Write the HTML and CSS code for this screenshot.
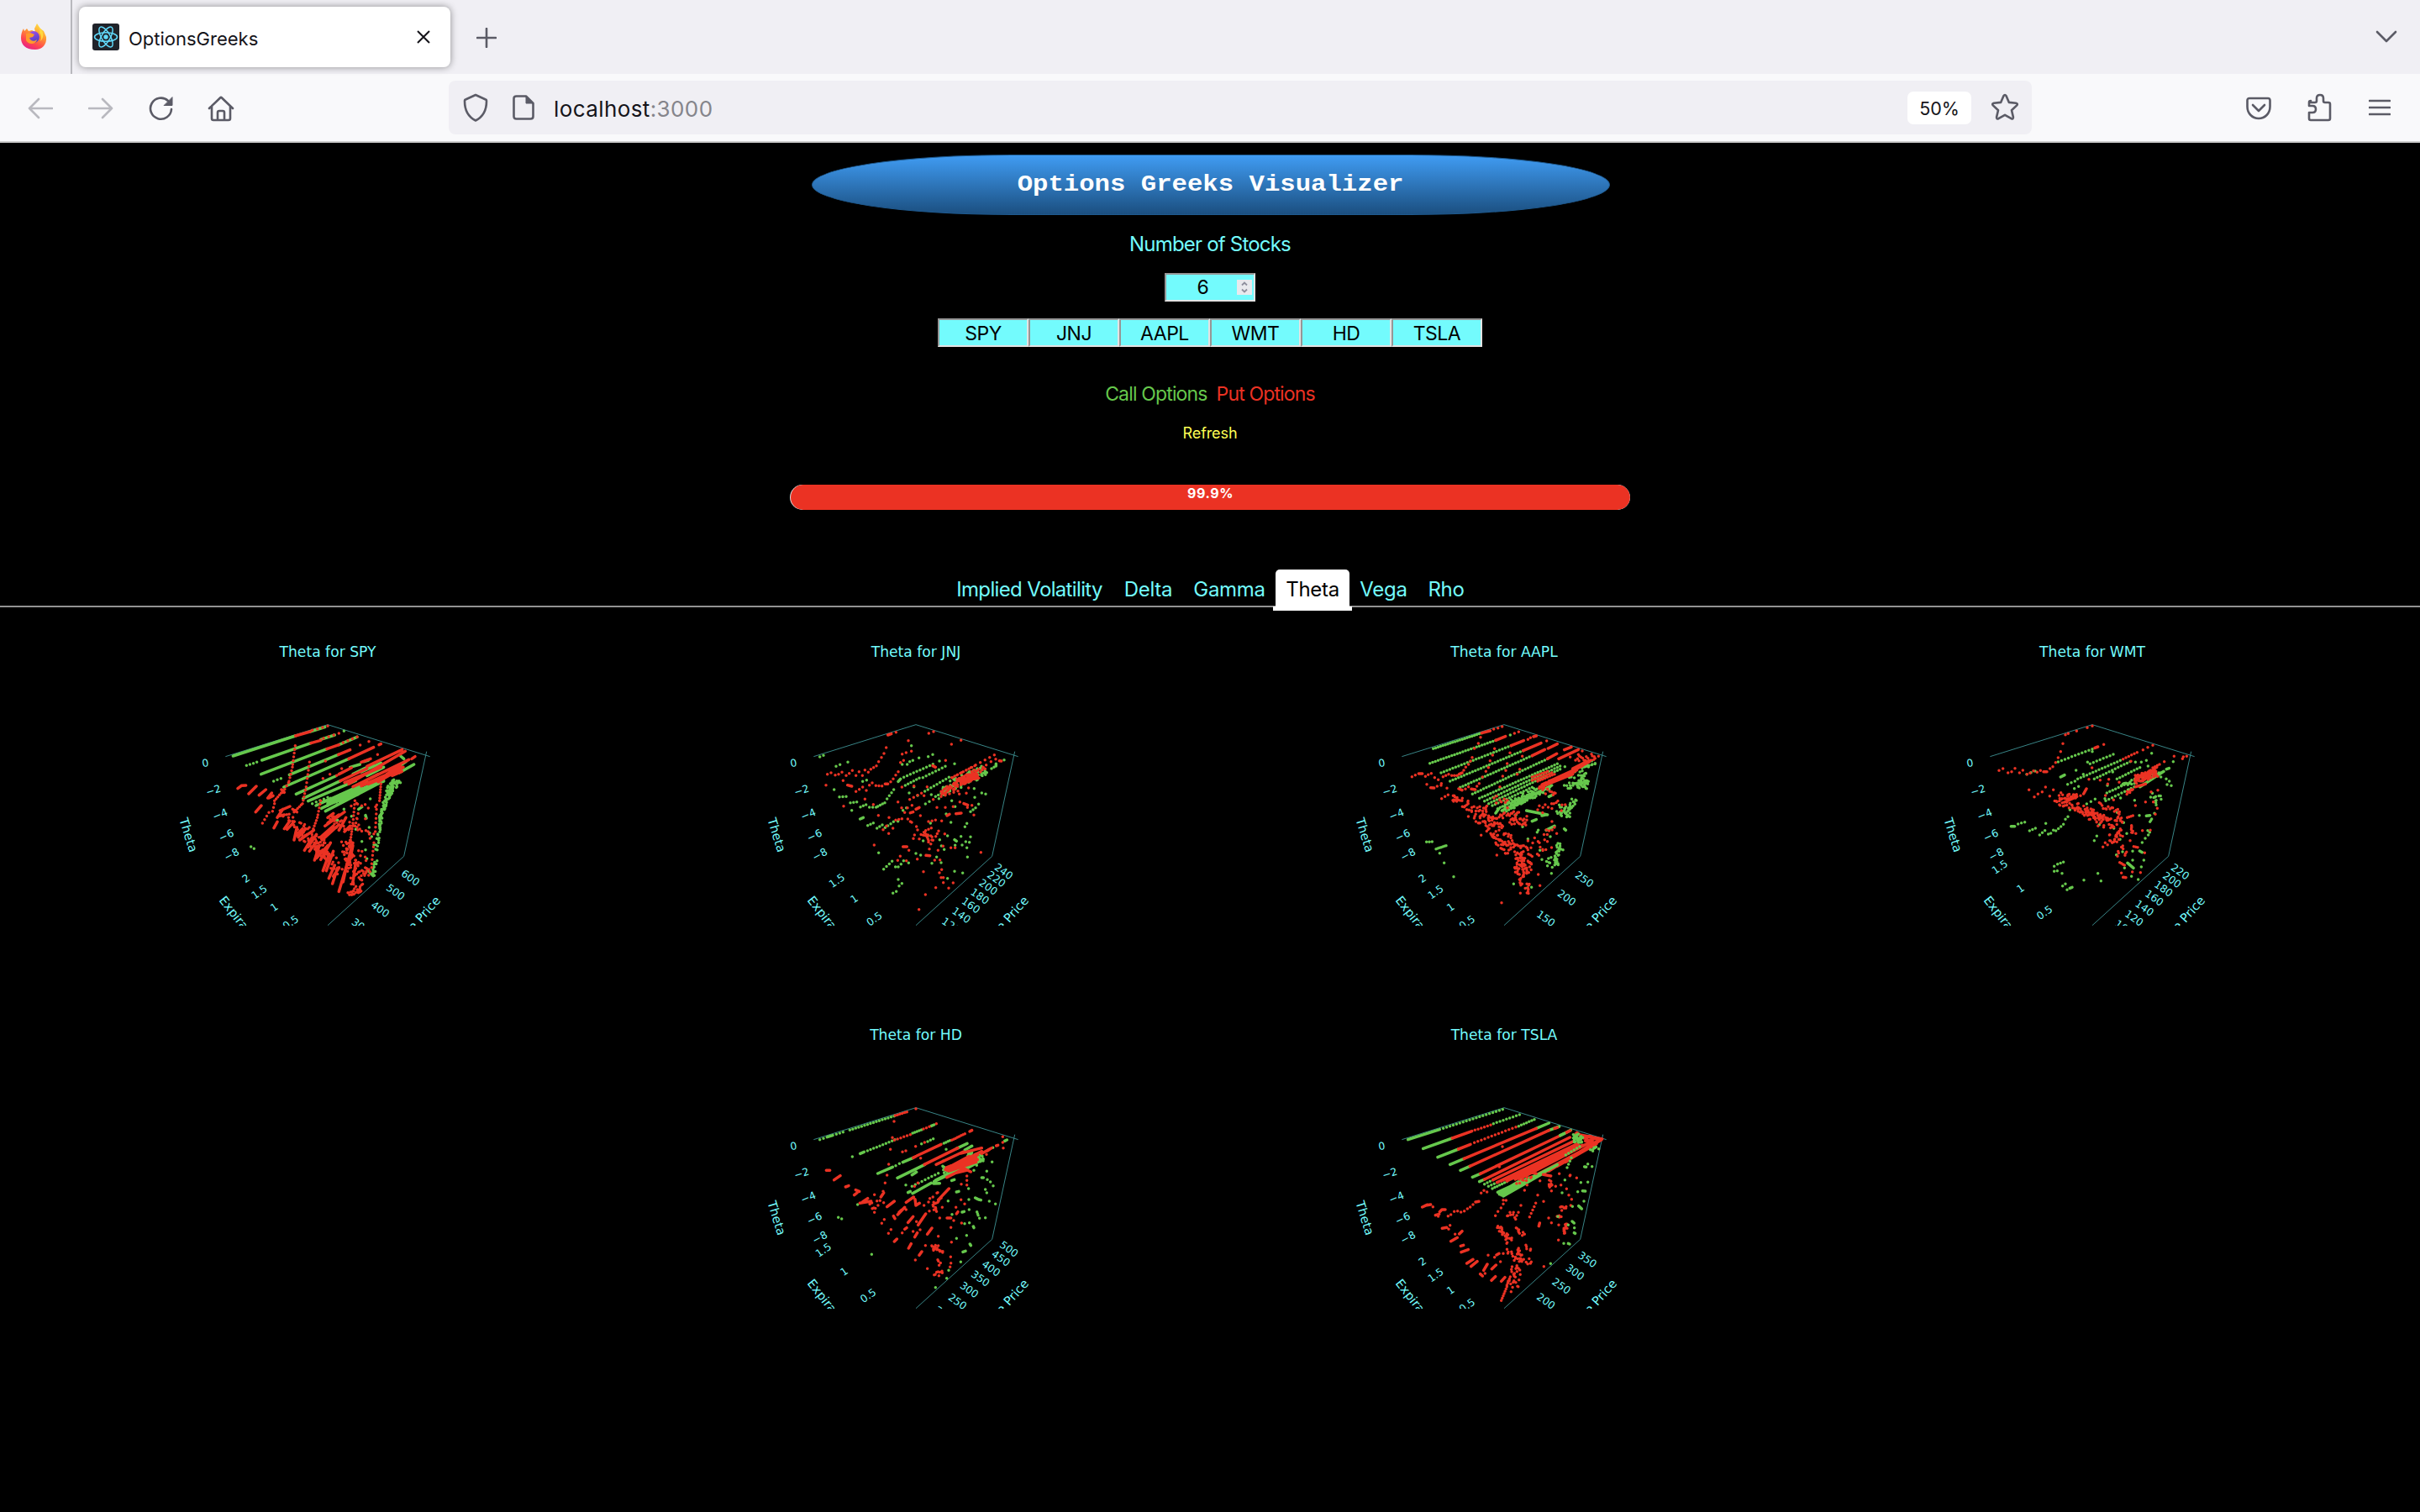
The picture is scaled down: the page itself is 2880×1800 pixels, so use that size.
FILE: index.html
```html
<!DOCTYPE html>
<html lang="en">
<head>
<meta charset="utf-8">
<title>OptionsGreeks</title>
<link rel="stylesheet" href="styles.css">
</head>
<body>
<header class="browser">
  <div class="tabstrip">
    <div class="pinned">
      <svg width="32" height="32" viewBox="0 0 32 32">
        <defs>
          <linearGradient id="fox" x1="0.8" y1="0" x2="0.3" y2="1"><stop offset="0" stop-color="#ffe84a"/><stop offset=".4" stop-color="#ff9a30"/><stop offset=".75" stop-color="#ff4550"/><stop offset="1" stop-color="#e5208a"/></linearGradient>
          <linearGradient id="globe" x1="0.3" y1="0" x2="0.6" y2="1"><stop offset="0" stop-color="#a14fe8"/><stop offset="1" stop-color="#4b3fc4"/></linearGradient>
        </defs>
        <path fill="url(#fox)" d="M4 6l1 3 3-3 2 3 4-1 4 2-1-4 3-6 4 6 4 3 3 7c1 9-5 15-13 15C6 31 1 25 1 17c0-4 1-8 3-11z"/>
        <circle cx="16" cy="16" r="7" fill="url(#globe)"/>
        <path fill="#ff9a2c" d="M7 12l5-1 5 2-2 3-4 1c1 4 6 5 9 2-1 6-10 7-13 1z"/>
        <path fill="#ffd83e" d="M20 2c3 3 4 6 3 9 2 2 3 6 1 10 4-3 4-9 2-13z"/>
      </svg>
    </div>
    <div class="tab">
      <svg class="favicon" width="32" height="32" viewBox="0 0 32 32">
        <rect width="32" height="32" rx="3" fill="#20232a"/>
        <g fill="none" stroke="#61dafb" stroke-width="1.5">
          <ellipse cx="16" cy="16" rx="13.5" ry="5.2"/>
          <ellipse cx="16" cy="16" rx="13.5" ry="5.2" transform="rotate(60 16 16)"/>
          <ellipse cx="16" cy="16" rx="13.5" ry="5.2" transform="rotate(120 16 16)"/>
        </g>
        <circle cx="16" cy="16" r="2.7" fill="#61dafb"/>
      </svg>
      <span class="tab-title">OptionsGreeks</span>
      <svg class="close" width="16" height="16" viewBox="0 0 16 16"><path d="M1 1l14 14M15 1L1 15"/></svg>
    </div>
    <svg class="stroke plus" width="24" height="24" viewBox="0 0 24 24"><path d="M12 1v22M1 12h22"/></svg>
    <svg class="stroke chevron" width="26" height="16" viewBox="0 0 26 16"><path d="M2 2l11 11L24 2"/></svg>
  </div>
  <div class="toolbar">
    <svg class="stroke dim back" width="30" height="26" viewBox="0 0 30 26"><path d="M29 13H2M13 2L2 13l11 11"/></svg>
    <svg class="stroke dim fwd" width="30" height="26" viewBox="0 0 30 26"><path d="M1 13h27M17 2l11 11-11 11"/></svg>
    <svg class="stroke reload" width="30" height="30" viewBox="0 0 30 30"><path d="M27 16a12.5 12.5 0 1 1-4-10"/><path class="solid" d="M28 2v9.5h-9.500z"/></svg>
    <svg class="stroke home" width="32" height="32" viewBox="0 0 32 32"><path d="M2 16L15 3.500q1-1 2 0L30 16M5 13v15q0 2 2 2h18q2 0 2-2V13M12 30v-9q0-2 2-2h4q2 0 2 2v9"/></svg>
    <div class="urlbar">
      <svg class="stroke shield" width="30" height="34" viewBox="0 0 30 34"><path d="M15 2l12 5.500q1 0 1 2c0 9-3 18-13 23C5 27.500 2 18.500 2 9.500q0-2 1-2z"/></svg>
      <svg class="stroke page-icon" width="26" height="30" viewBox="0 0 26 30"><path d="M4.500 1.500H16L24.500 10v15.500q0 3-3 3h-17q-3 0-3-3v-21q0-3 3-3z"/><path class="solid" d="M16 2v8h8z"/></svg>
      <span class="url">localhost<span class="port">:3000</span></span>
      <span class="zoom">50%</span>
      <svg class="stroke star" width="34" height="34" viewBox="0 0 34 34"><path d="M15.400 3.300q1.600-2.500 3.200 0l3.300 7.600 8.300.8q2.600.5 1 2.700L25 20.200l1.900 8.200q.2 2.600-2.300 1.800L17 25.800l-7.600 4.400q-2.500.8-2.300-1.800L9 20.200l-6.200-5.800q-1.600-2.200 1-2.700l8.300-.8z"/></svg>
    </div>
    <svg class="stroke pocket" width="30" height="28" viewBox="0 0 30 28"><path d="M4 2h22q2.500 0 2.500 2.500V12c0 8-6 14-13.500 14S1.500 20 1.500 12V4.500Q1.500 2 4 2zM8 10l7 7 7-7"/></svg>
    <svg class="stroke ext" width="30" height="34" viewBox="0 0 30 34"><path d="M4 11h5q2 0 2-2V6q0-4 4-4t4 4v3q0 2 2 2h4q2 0 2 2v17q0 2-2 2H4q-2 0-2-2v-7h4q4 0 4-4t-4-4H2v-4q0-2 2-2z"/></svg>
    <svg class="stroke burger" width="26" height="20" viewBox="0 0 26 20"><path d="M1 2h24M1 10h24M1 18h24"/></svg>
  </div>
</header>
<main>
  <h1 class="banner"><span>Options Greeks Visualizer</span></h1>
  <label class="count-label">Number of Stocks</label>
  <div class="field count"><span>6</span>
    <svg class="spinner" width="18" height="18" viewBox="0 0 18 18"><rect width="18" height="18" fill="#e9e9ed" stroke="none"/><path d="M6 6.500l3-3 3 3M6 11.500l3 3 3-3"/></svg>
  </div>
  <div class="tickers">
    <div class="field">SPY</div><div class="field">JNJ</div><div class="field">AAPL</div><div class="field">WMT</div><div class="field">HD</div><div class="field">TSLA</div>
  </div>
  <div class="legend"><span class="calls">Call Options</span><span class="puts">Put Options</span></div>
  <div class="refresh">Refresh</div>
  <div class="progress"><div class="bar" style="width:99.9%">99.9%</div></div>
  <nav class="greeks">
    <span class="greek iv">Implied Volatility</span><span class="greek delta">Delta</span><span class="greek gamma">Gamma</span><span class="greek active">Theta</span><span class="greek vega">Vega</span><span class="greek rho">Rho</span>
  </nav>
  <section class="charts" id="charts"></section>
</main>
<script src="charts.js"></script>
</body>
</html>
```
FILE: styles.css
```css
* { box-sizing: border-box; }
body { margin: 0; background: #000; font-family: Inter, "Liberation Sans", sans-serif; width: 2880px; height: 1800px; overflow: hidden; }
svg { display: block; flex: none; }
.browser { height: 170px; border-bottom: 2px solid #cccccc; background: #f9f9fb; }
.tabstrip { height: 88px; background: #f0eff4; display: flex; align-items: center; }
.pinned { width: 86px; height: 88px; padding: 28px 0 0 24px; border-right: 2px solid #b8b8bd; }
.tab { width: 442px; height: 72px; margin-left: 8px; padding: 0 24px 0 16px; display: flex; align-items: center; background: #fff; border-radius: 8px; box-shadow: 0 0 8px rgba(0,0,0,.42); }
.tab-title { margin-left: 11px; flex: 1; font-size: 22px; color: #15141a; padding-top: 3px; }
.close { fill: none; stroke: #15141a; stroke-width: 2; }
.stroke { fill: none; stroke: #5b5b66; stroke-width: 2.600; stroke-linecap: round; stroke-linejoin: round; }
.stroke .solid { fill: #5b5b66; stroke-width: 1; }
.plus { margin-left: 31px; margin-top: 2px; }
.chevron { margin-left: auto; margin-right: 27px; }
.toolbar { height: 80px; display: flex; align-items: center; padding-top: 2px; }
.dim { stroke: #b9b9bf; }
.back { margin-left: 33px; }
.fwd { margin-left: 42px; }
.reload { margin-left: 42px; }
.home { margin-left: 40px; }
.urlbar { width: 1884px; height: 64px; margin: -2px 0 0 255px; border-radius: 8px; background: #f0eff4; display: flex; align-items: center; }
.shield { margin-left: 17px; }
.page-icon { margin-left: 29px; }
.url { margin-left: 23px; flex: 1; font-size: 26px; letter-spacing: .4px; color: #15141a; padding-top: 2px; }
.port { color: #85858b; }
.zoom { width: 76px; height: 39px; border-radius: 7px; background: #fff; font-size: 21.500px; line-height: 41px; text-align: center; color: #15141a; }
.star { margin: 0 15px 0 23px; }
.pocket { margin-left: 255px; }
.ext { margin-left: 43px; margin-top: -2px; }
.burger { margin-left: 43px; margin-top: -2px; }

main { display: flex; flex-direction: column; align-items: center; padding-top: 14px; color: #73fbfd; font-size: 24px; line-height: 34px; }
.banner { width: 950px; height: 72px; margin: 0 0 0 2px; border: 1px solid #1f5a8f; border-radius: 25% / 50%; background: linear-gradient(#409cf3, #1b4f80); color: #fff; font: bold 27px/70px "Liberation Mono", monospace; text-align: center; }
.banner span { display: inline-block; transform: scaleX(1.135); }
.count-label { margin-top: 18px; letter-spacing: -.8px; }
.field { width: 108px; height: 34px; border: 2px solid; border-color: #969696 #e3e3e3 #e3e3e3 #969696; background: #73fbfd; color: #000; text-align: center; line-height: 32px; font-size: 23px; letter-spacing: -.5px; }
.count { margin-top: 17px; display: flex; align-items: center; }
.count span { flex: 1; padding-left: 3px; }
.spinner { margin-right: 2px; fill: none; stroke: #8f8f9d; stroke-width: 1.800; }
.tickers { display: flex; margin-top: 20px; }
.legend { display: flex; gap: 11px; margin-top: 39px; font-size: 23px; letter-spacing: -.85px; }
.calls { color: #66c84c; }
.puts { color: #eb3223; }
.refresh { margin-top: 13px; color: #ffff54; font-size: 18px; letter-spacing: -.1px; }
.progress { width: 1000px; height: 30px; margin-top: 44px; border-radius: 15px; background: #e0e0de; overflow: hidden; display: flex; justify-content: flex-end; }
.bar { background: #eb3223; border-radius: 15px; color: #fff; font-weight: 700; font-size: 16px; letter-spacing: .6px; line-height: 21px; text-align: center; }
.greeks { align-self: stretch; height: 45px; margin-top: 71px; padding-left: 1125px; display: flex; border-bottom: 2px solid #929292; }
.greek { height: 43px; line-height: 47px; text-align: center; white-space: nowrap; letter-spacing: -.3px; }
.iv { width: 200px; letter-spacing: -.65px; }
.delta { width: 83px; }
.gamma { width: 110px; }
.active { width: 88px; height: 45px; background: #fff; color: #000; border-radius: 5px 5px 0 0; position: relative; }
.active::after { content: ""; position: absolute; left: -3px; top: 44px; width: 94px; height: 5px; background: #fff; }
.vega { width: 81px; }
.rho { width: 68px; }
.charts { width: 2800px; margin-top: 17px; display: flex; flex-wrap: wrap; justify-content: center; }
.chart { width: 700px; height: 456px; padding-left: 150px; }
.chart text { fill: #73fbfd; font-family: "DejaVu Sans", sans-serif; font-size: 37px; text-anchor: middle; dominant-baseline: central; }
.chart .title { font-size: 51.500px; }
.chart .axis { font-size: 44px; }
.frame { fill: none; stroke: #388486; stroke-width: 3; }
.call, .put { fill: none; stroke-width: 10.500; stroke-linecap: round; }
.call { stroke: #66c84c; }
.put { stroke: #eb3223; }
```
FILE: charts.js
```js
// Marks: "x,y" point; "x1,y1,x2,y2" packed series; a fifth value is the point spacing;
// six values "x1,y1,x2,y2,spread,count" are a loose group around a segment.
const charts = [
{ name: 'SPY', dy: 0, years: [['2',309,918],['1.5',356,966],['1',409,1021],['0.5',468,1075]],
  strikes: [['600',895,916],['500',842,967],['400',787,1028],['300',718,1089]], layers: [
  ['call', '262,480,485,408 537,393,590,377 310,514,347,502,12 365,495,540,434 575,421,625,405 658,391 362,545,597,455 640,440,705,412 407,570,433,560,13 463,547,638,475 443,591,675,490 487,616,628,552 512,632,645,569 530,641,700,568 545,650,600,628,14 558,657,740,575 577,667,770,575 592,677,800,568 580,645,700,600 680,520,715,510 730,500,745,495 690,545,760,510 720,537,790,505 740,550,800,520 860,480,872,490 855,540,908,510 670,615,800,570 640,640,790,575 650,630,740,590 600,650,720,595 820,540,880,500'],
  ['call', '595,648,705,608,12,50 850,565,815,610,14,50 820,610,800,660,8,22 800,660,790,700,6,18 790,700,785,740,5,12 785,740,772,820,5,12 770,850,762,910,7,11 745,890,762,908 710,670,722,662 735,692,738,702 752,633 658,670 685,695 622,706,635,709 700,742 722,785 735,815 740,847 748,735 765,797 326,804 337,811 750,755 757,768'],
  ['put', '485,408,537,393 545,388,600,373,17 540,434,575,424 585,417,640,399,17 597,455,640,440 655,432,705,412,17 638,475,680,458 675,490,764,449 640,545,685,522 720,502,753,490 645,569,740,525 660,575,790,520 675,580,877,463 740,517,866,457 690,590,890,493 720,587,870,520 745,580,860,532 780,572,870,520 705,583,780,545 810,545,860,515 830,550,865,535 900,490,912,482 716,441 747,428 783,440,790,437 778,475 592,498 650,525 608,545 583,560 632,550'],
  ['put', '484,443,475,510,14 474,520,462,570,12 460,575,440,610,12 440,605,410,640,10 410,650,403,677,12 390,682,367,720,13 535,502,525,575,14 523,590,510,650,12 505,655,480,680,10 575,640,565,690,14 563,700,545,750,11 697,640,690,720,14 690,720,680,790,10 790,580,785,640,10 775,655,770,750,17 765,790,757,865,15 757,878,728,900,13'],
  ['put', '279,596,292,586 292,586,308,585 318,615,345,588 355,620,379,600 343,680,363,657 386,630,400,612 390,630,405,622 408,737,420,715 420,700,440,670 425,695,445,690 430,675,465,660 435,600,445,610 445,740,465,712 455,742,480,715 475,670,490,680 480,780,490,735 485,765,510,740 495,770,520,742 500,780,550,745 517,817,545,770 530,805,560,760 535,820,560,785 553,852,570,800 560,845,600,800 575,850,610,790 583,890,605,830 595,890,620,820 604,917,625,870 617,936,635,880 620,910,640,880 640,964,665,880 655,930,670,860 665,880,690,790 575,770,620,730 580,780,640,725 590,730,660,680 600,700,620,685 600,720,640,690 640,745,665,700 660,750,680,730 690,930,700,860 680,850,690,800'],
  ['put', '440,690,530,750,16,18 500,750,610,820,22,36 550,790,600,850,18,26 600,710,700,740,22,20 600,820,640,900,18,16 670,780,680,870,24,34 690,860,705,970,24,36 670,970,720,960,9,12 700,690,750,780,24,14 720,810,725,910,16,10 730,880,750,905,10,7 675,655,770,670,12,7'] ]},
{ name: 'JNJ', dy: 0, years: [['1.5',318,926],['1',380,991],['0.5',452,1062]],
  strikes: [['240',913,893],['220',887,920],['200',858,949],['180',828,982],['160',796,1014],['140',762,1049],['120',725,1086]], layers: [
  ['call', '257,483 270,478 315,517 329,511 357,502 308,600 327,626,351,625,12 366,647,389,644,11 371,674 402,662,422,654,11 434,663,458,663,11 464,660,489,647,9 497,633,521,600,14 410,571 424,566 401,705,412,700 428,728,448,719,10 461,738,480,726,10 490,736,520,715,11 536,713 551,510,569,510,14 578,500 589,496 611,487 644,482 660,475 584,443 537,571,545,562 557,556,661,509,12.5 562,585,612,559,12 625,557,705,517,12 632,606,718,556,12.5 684,498 738,508 606,621 593,590 576,612 634,651 648,643 670,625,720,597,12 655,618 682,632 915,494 886,508,886,516 879,520 848,539 870,525'],
  ['call', '690,605,850,530,20,80 808,596 835,612 849,616 810,628 824,652 813,665,795,679,12 740,661 728,640 708,687 652,720 725,717 782,721 775,733 713,765 738,779,745,784 761,767 795,769 778,786 791,788 765,798 782,808 740,799 685,779 701,814 691,801 690,861 657,863 674,841 784,841 738,892 767,898 713,917 642,766 626,783 600,828 617,834 554,674 566,665 467,826 485,884,515,856,14 527,876 537,876 547,866 556,854 574,862 537,921 550,935 540,944 530,964 518,970'],
  ['put', '284,545 297,540 312,548 324,545 336,538 351,550 362,542 373,532 386,550 397,536 409,550 418,530 430,538 439,527,459,515,11 467,500 477,485 486,471 494,450 500,405,512,401 529,395 646,399 663,393 573,425 551,473 565,468 584,463 727,438 761,424 279,584 340,568 356,584,371,588 386,607 398,599 410,591 423,603 434,584 444,576 457,586,479,587,11 490,580,500,580 510,572 519,562 528,548 537,536 545,503 556,496 660,515,670,520 706,496 342,659 418,634 448,653 466,692 504,700 528,709,550,704,11 571,705 580,714 585,717 602,732 606,744 495,730 483,743 518,738 503,757 451,798'],
  ['put', '730,557,880,476,18 728,557,810,515,12 550,591 593,587 640,590 578,635,620,613,14 629,622 536,644 549,665 560,682 570,665 586,656 580,683,590,680 600,670,612,664 616,693 645,714,670,709,12 692,712 675,664 705,664 733,661 662,635 711,693,720,688 743,686,762,684 784,664 757,644 771,650,785,655 800,656 807,691 780,613 755,616 788,594 690,625,750,605,15 898,497,905,498 885,491 868,500 851,512 840,520'],
  ['put', '755,573,820,547,13,110 690,615,750,580,12,30 740,570,850,520,8,24 655,737,635,746,10 625,750,660,790,12,16 595,762 591,775 612,776 681,748,671,767,9 703,758 648,812 679,817 697,802 725,808 740,808 636,835,650,836 554,804,568,804 575,817 605,848 544,838 535,853 566,854 686,851 667,852 627,893 692,886 684,897 690,914 698,914 698,932 733,933 717,952 671,950 634,975 611,1028 832,824'] ]},
{ name: 'AAPL', dy: 0, years: [['2',309,918],['1.5',356,966],['1',409,1021],['0.5',468,1075]],
  strikes: [['250',886,921],['200',823,987],['150',749,1061]], layers: [
  ['call', '347,454,520,398,9 335,506,570,424,10.5 375,540,625,443,11 407,570,668,461,11 443,592,700,479,11 487,616,755,490,11 512,631,790,508,11 530,641,800,516,11 545,650,800,527,11 558,657,700,592,11 570,684,580,670 577,668,700,612,10 592,675,770,585 600,682,720,610,10 622,405 817,518 323,787,343,786,10 357,812,393,800,6 370,827 386,862 420,911 634,937 683,951 698,949 769,899 600,655,720,600,9,34 630,665,770,590,6,30'],
  ['call', '825,550,925,500,12,30 860,575,900,580,18,32 790,665,840,680,20,20 820,595,895,540,14,26 810,700,850,630,14,24 755,690,680,675 735,693,748,690 700,713,715,707 666,733 722,745 718,752 685,776 640,690 760,625,775,618 765,768 815,740,820,745 780,730,750,745 790,790,805,820,10,9 790,815,785,870,8,18 760,840,770,880,14,8 728,817 735,850 643,690'],
  ['put', '520,398,550,390 563,384 578,380 593,375 570,424,605,410 637,399 652,394 516,413 625,443,670,425 685,421 694,415 705,411,715,408 668,461,732,434 700,479,745,457 790,437,757,453 755,490,788,472 752,426 815,458,840,448 795,490,865,457 879,462 700,555,755,535,10 700,567,770,540,10 720,570,780,545,10 865,475 855,495 836,484 937,481 925,488 915,480'],
  ['put', '725,595,855,532 727,590,850,537 732,590,845,545 735,582,850,530 740,580,840,540 760,570,830,545 800,560,860,530 840,535,905,500 820,545,880,515 845,525,895,500 860,490,925,485,14,14 725,600,790,610,14,10'],
  ['put', '271,554 283,548 295,543,308,543 319,553 329,547 340,542 352,557 365,565 324,581 338,593,350,594 361,588 376,578 375,585 382,554 392,550 402,545 413,550,432,550,9 440,545,450,540 456,531 463,520 473,510 480,498 486,485 494,453 508,435 396,595 377,632 389,625 400,619 438,597,450,602 462,598 473,590 483,598,497,600 503,588 511,578 523,555 535,535 544,521 550,497 559,477 566,454 606,532 595,552 611,507 621,469 656,527 665,481 647,545 585,590 415,635,435,630,13,12 445,655,470,635,16,10 467,689,520,655,16,12 490,710,545,660,13,13'],
  ['put', '510,700,570,720,20,24 535,745,600,740,24,26 560,785,630,775,24,28 590,800,670,820,24,28 580,700,655,680,11,16 620,715,685,710,16,22 645,840,690,880,26,36 640,870,690,900,22,20 660,905,690,970,16,18 670,790,720,840,20,12 710,770,760,820,22,11 740,740,790,740,26,8 720,680,820,650,24,14 560,630,620,655,14,9 574,834 591,1004 658,970 728,943 722,903 518,763'] ]},
{ name: 'WMT', dy: 0, years: [['1.5',270,877],['1',344,954],['0.5',430,1040]],
  strikes: [['220',913,894],['200',884,923],['180',854,955],['160',821,988],['140',786,1024],['120',749,1060],['100',713,1095]], layers: [
  ['call', '478,501,600,455,13 600,464 583,502 592,508,675,474,12 512,581,538,570,14 548,562,700,496,12 607,562,735,500,12 688,562,770,521,12 652,612,735,573,12 648,640,750,590,12 645,632 580,651,610,634,15 487,555,501,548 542,531 536,596 551,589 568,545 673,537 654,585 812,470 793,496 799,516 754,502 775,502 889,500 874,524,865,527 366,545,396,534,14 310,731,323,731 335,723,359,716,12 376,747,397,738,11 412,762,431,746,12 434,721 443,759 452,756 461,745 470,747,497,724,11 504,706 513,697 520,672 464,874 476,866,497,859,11 464,892 475,890 492,899 494,944 504,937 510,958 520,952,528,949 570,923 620,899 631,926 607,782 616,766'],
  ['call', '700,585,850,540,8,26 770,590,855,535 845,555 864,562 875,570 882,586 867,582 808,625,850,628,14,10 826,640,828,655,10 822,685 812,705,806,715,6 793,694,806,692 768,692 751,638 731,600 701,630 712,718 677,738 723,757 699,778 689,682 625,725 798,746 805,752 800,762 789,774 778,789 769,819,778,824 744,820 784,852 744,852 726,862,747,880 715,880 775,876 740,910 764,921 686,833 708,822 540,625'],
  ['put', '504,404 514,400 544,391 582,379 600,373 495,436 487,464 478,486 469,503 459,518 449,525 438,536,426,536 415,532 403,538 390,533 378,541 367,545 352,531 340,540 324,524 312,536 299,540 281,525 267,532 374,601 393,626 406,616 421,608 433,591 461,601 488,611 448,623 609,451,620,447 641,439 710,491,760,467,11 781,458 798,449 816,442 599,522 655,580 588,563 628,566 659,563 696,574 738,499 569,615,579,597 558,622 892,481 937,481 925,483 922,490 857,500 816,522,840,510,10 513,619 500,645,545,625'],
  ['put', '480,630,545,625,12,18 465,640,550,670,10,20 540,660,610,690,14,26 570,690,640,700,14,26 620,660,700,670,14,14 610,715,690,720,18,30 690,680,710,720,10,10 660,780,710,760,18,18 690,770,640,800,8,5 745,725,748,760,8,9 725,700,745,693,7 700,740 735,782 748,803,762,806,7 700,800,713,840,15,8 698,860,715,870,7 704,898 710,913,720,914 743,894 772,896 787,826 779,746 807,745 832,667 825,688 818,644 834,602 810,608 790,644 754,657 676,637 647,621 638,805 690,838'],
  ['put', '750,565,830,540,15,85 755,590,790,580 720,610,745,600,8,8 820,525,830,520'] ]},
{ name: 'HD', dy: 12, years: [['1.5',270,865],['1',344,942],['0.5',430,1028]],
  strikes: [['500',932,862],['450',903,895],['400',868,931],['350',830,967],['300',790,1007],['250',748,1049],['200',700,1095]], layers: [
  ['call', '257,470,270,466,12 283,461,303,455 316,451,340,443,12 364,436,522,386,11 373,531 401,520,415,514 427,510,515,475,12 525,470 588,447,620,435,9 655,421,665,417 464,591,517,568 528,563 541,556 553,551,590,535 620,485 642,477,662,467,10 700,483,722,473,9 534,607,632,559 586,596,602,586 745,502,783,484 775,507,800,493 564,632 586,637,680,590,13 572,659,580,655 588,662,655,625 665,620,760,575 663,627,685,626 670,615,740,580 708,505 697,547 770,580,840,540 715,595,830,545 875,499 917,475,925,471'],
  ['call', '785,535,840,530,18,50 690,575,720,590,12,14 817,562 872,550 853,583 807,580 835,606,841,606 855,613 866,621 876,635 848,648 853,660 862,690 884,700 788,645 745,657,753,655 728,616,737,613 812,678,820,682 824,684,832,686 789,684 790,720 715,689 765,729,772,727 818,728,822,740,8 827,751 848,749 791,767 805,780,807,785 774,770 729,737 781,812 745,823 793,843,796,848 768,871,777,868 760,907 717,937 710,965 670,998 442,880 392,702 323,748 335,753'],
  ['put', '526,384,568,371,9 600,360 523,472,580,452,12 627,432,648,424,9 673,413 522,405 516,463 509,505 503,558 497,597 490,625 552,514 564,510 599,494 617,536 590,535,600,530 603,528,690,487 728,472,775,449,8 792,441,800,437 630,559,750,500 672,559,770,513 760,519,835,500 631,480 595,637 607,625 910,460 910,480 912,500 887,492,893,490 862,505,855,510 852,523'],
  ['put', '708,570,820,525 705,577,815,535 712,580,820,542 718,582,815,550 715,570,790,530 725,568,835,512 735,570,800,545 710,605,770,575 740,590,780,580 835,520,870,500'],
  ['put', '280,580,293,580 308,614,330,599 349,639,360,635 385,650,398,655 380,668,390,660 400,697,440,690 410,692,428,680 434,702,462,714,12,6 452,667 461,689 472,688 475,675,485,660 483,655 485,695 497,710,523,690 452,730 487,755 478,769 520,743,525,752 511,791 502,805 523,834,532,825 535,738,560,712 565,720 565,694,592,675 597,683,600,705 600,705,613,697 629,705 645,693 540,730,548,722 551,803 560,790,567,785 572,766,590,745 574,858,583,842 590,798 596,818,605,803 608,775,635,735 615,792 602,763 641,808,657,786 641,931 598,900 612,883,621,870 634,848 680,685,718,645'],
  ['put', '655,690,690,670,16,9 665,690,670,728,8,10 685,750 694,712 648,725 680,815 663,865,670,848 670,840,688,880,16,12 680,895,683,920,6,4 670,960,690,935,12,8 727,836 725,784 735,759 745,735,750,728 743,712 711,750,725,750 675,661 782,600,782,632,13 770,572,796,585 762,629 761,685 774,700 763,768 724,889 725,911 722,925'] ]},
{ name: 'TSLA', dy: 12, years: [['2',309,906],['1.5',356,954],['1',409,1009],['0.5',468,1063]],
  strikes: [['350',897,899],['300',853,944],['250',804,994],['200',749,1048]], layers: [
  ['call', '257,470,370,434 383,430,595,362,12.500 311,502,415,465 562,413,655,381,12 363,533,437,504 652,422,708,398,11 407,559,457,538 715,430,760,411 444,580,478,565 760,437,797,423 487,604,515,592 800,456,838,436 512,620,530,612 530,629,560,614,10 544,637,575,623,10 558,645,610,620,10'],
  ['put', '415,465,485,440 496,436,552,418,13 437,504,480,487 494,481,642,425,13 457,538,715,430 478,565,760,437 780,430,790,427 515,592,800,456 820,446,836,438 530,612,835,462 560,614,850,475 575,623,862,485 590,618,867,490,7 610,618,880,490 640,612,892,487 660,608,915,475 700,605,930,482 740,590,948,470 850,530,948,470 760,582,940,470 790,565,930,485 820,550,920,485 855,450,950,468 860,445,925,490 885,465,910,458 890,475,930,465'],
  ['call', '577,658,690,606 583,665,760,575 590,668,790,560 597,672,740,590 620,640,720,595 600,650,660,615 820,525,870,495,12 845,465,880,470,15,26 800,455,815,448 855,458,865,450 910,510,935,497,7,8 840,535,825,570,14 790,560,700,606'],
  ['put', '640,625,720,590,8,12 518,661 528,652 539,657 498,693,510,691 489,702 479,711 469,717 458,725 446,729 434,725 422,727 410,738 400,743 390,720,378,720 378,720,370,728 355,740,368,736 365,744 346,710 338,702,320,705 308,711,325,703 379,787,395,784 402,790 407,776 410,833,433,820 425,808 440,807,450,797 445,850,455,847 447,872,472,863 467,912,489,898 482,923,504,905 515,950,523,957 527,937,540,915 532,948 555,973,569,959 556,932,571,918 543,883 566,890 573,882,582,877 587,906 590,976,603,962 590,1045,610,995,9 610,990,622,960,9 594,495 583,567 597,686 607,687 589,714 578,727 569,742 597,700'],
  ['put', '585,775,600,815,13,14 600,830,625,815,14,10 610,745,635,728,7,6 640,755,640,740,7,3 660,705 651,730 645,780,670,810,10,8 665,812 680,845,690,870,8,5 612,860,600,883,10,4 640,860,650,910,16,18 655,875,690,920,16,9 635,920,650,960,16,15 615,985,655,980,16,10 625,1013 697,907 742,923 691,746,713,697,12 720,668 741,691 727,768,724,779 673,651 682,632 728,617 755,635,770,620,10,8 767,600,740,595 797,592 769,653 784,637 803,632 823,646 831,668 841,683 838,705 822,705,800,720,8,8 790,750,805,740,6,4 759,750 769,767 795,775 825,770,810,805,8,14 794,829 859,607 836,597,835,599'],
  ['call', '899,557 914,566 887,567,893,568 874,623 899,622 863,656 880,653,890,654 885,690 866,707,877,717 844,709 817,614 807,660 792,745 843,762,850,768 829,775 851,785 850,803,854,805 813,841 829,841,834,843 766,913'] ]}
];

let seed = 7;
const rnd = () => (seed = (seed * 16807) % 2147483647) / 2147483647;

function marks(data) {
  let d = '';
  for (const token of data.split(' ')) {
    const [x, y, x2, y2, a, n] = token.split(',').map(Number);
    if (x2 === undefined) d += `M${x} ${y}h.01`;
    else if (n !== undefined) {
      const len = Math.hypot(x2 - x, y2 - y) || 1;
      for (let i = 0; i < n; i++) {
        const t = (i + rnd()) / n, o = (rnd() * 2 - 1) * a;
        d += `M${(x + (x2 - x) * t - (y2 - y) / len * o).toFixed(1)} ${(y + (y2 - y) * t + (x2 - x) / len * o).toFixed(1)}h.01`;
      }
    } else if (a !== undefined) {
      const k = Math.max(1, Math.round(Math.hypot(x2 - x, y2 - y) / a));
      for (let i = 0; i <= k; i++) d += `M${(x + (x2 - x) * i / k).toFixed(1)} ${(y + (y2 - y) * i / k).toFixed(1)}h.01`;
    } else d += `M${x} ${y}L${x2} ${y2}`;
  }
  return d;
}
const label = (t, x, y, r, c = '') => `<text class="${c}" transform="translate(${x} ${y}) rotate(${r})">${t}</text>`;

document.getElementById('charts').innerHTML = charts.map(c => `
<div class="chart"><svg width="400" height="362" viewBox="0 0 1200 1086">
${label('Theta for ' + c.name, 600, 108, 0, 'title')}
<path class="frame" d="M235 482L600 368L965 482M953 464L872 838L600 1085"/>
${c.layers.map(([k, d]) => `<path class="${k}" transform="translate(0 ${c.dy})" d="${marks(d)}"/>`).join('')}
${label('0', 163, 506, -10)}${label('−2', 192, 603, -17)}${label('−4', 216, 689, -22)}${label('−6', 238, 764, -25)}${label('−8', 257, 832, -28)}
${label('Theta', 104, 762, 73, 'axis')}
${label('Expiration', 292, 1073, 52, 'axis')}${label('Strike Price', 910, 1079, -48, 'axis')}
${c.years.map(([t, x, y]) => label(t, x, y + c.dy, -35)).join('')}
${c.strikes.map(([t, x, y]) => label(t, x, y + c.dy, 35)).join('')}
</svg></div>`).join('');
```
